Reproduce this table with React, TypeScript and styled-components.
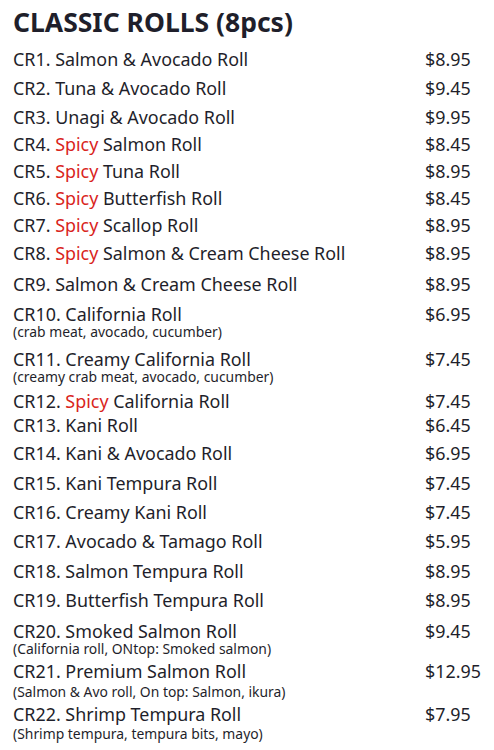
import React from 'react'
import styled, {createGlobalStyle} from "styled-components";

const COLORS = {
    text: '#1f1f2b',
    spicy: '#d9241c',
    bg: '#ffffff',
}

interface Item {
    code: string
    spicy?: boolean
    name: string
    price: string
    note?: string
    gap: number
    noteGap?: number
}

const ITEMS: Item[] = [
    {code: 'CR1.', name: 'Salmon & Avocado Roll', price: '$8.95', gap: 7},
    {code: 'CR2.', name: 'Tuna & Avocado Roll', price: '$9.45', gap: 5},
    {code: 'CR3.', name: 'Unagi & Avocado Roll', price: '$9.95', gap: 5},
    {code: 'CR4.', spicy: true, name: 'Salmon Roll', price: '$8.45', gap: 3},
    {code: 'CR5.', spicy: true, name: 'Tuna Roll', price: '$8.95', gap: 3},
    {code: 'CR6.', spicy: true, name: 'Butterfish Roll', price: '$8.45', gap: 3},
    {code: 'CR7.', spicy: true, name: 'Scallop Roll', price: '$8.95', gap: 3},
    {code: 'CR8.', spicy: true, name: 'Salmon & Cream Cheese Roll', price: '$8.95', gap: 4},
    {code: 'CR9.', name: 'Salmon & Cream Cheese Roll', price: '$8.95', gap: 7},
    {code: 'CR10.', name: 'California Roll', price: '$6.95', note: '(crab meat, avocado, cucumber)', gap: 6},
    {code: 'CR11.', name: 'Creamy California Roll', price: '$7.45', note: '(creamy crab meat, avocado, cucumber)', gap: 8},
    {code: 'CR12.', spicy: true, name: 'California Roll', price: '$7.45', gap: 5},
    {code: 'CR13.', name: 'Kani Roll', price: '$6.45', gap: 0},
    {code: 'CR14.', name: 'Kani & Avocado Roll', price: '$6.95', gap: 4},
    {code: 'CR15.', name: 'Kani Tempura Roll', price: '$7.45', gap: 6},
    {code: 'CR16.', name: 'Creamy Kani Roll', price: '$7.45', gap: 5},
    {code: 'CR17.', name: 'Avocado & Tamago Roll', price: '$5.95', gap: 5},
    {code: 'CR18.', name: 'Salmon Tempura Roll', price: '$8.95', gap: 6},
    {code: 'CR19.', name: 'Butterfish Tempura Roll', price: '$8.95', gap: 5},
    {code: 'CR20.', name: 'Smoked Salmon Roll', price: '$9.45', note: '(California roll, ONtop: Smoked salmon)', gap: 7},
    {code: 'CR21.', name: 'Premium Salmon Roll', price: '$12.95', note: '(Salmon & Avo roll, On top: Salmon, ikura)', gap: 3, noteGap: 3},
    {code: 'CR22.', name: 'Shrimp Tempura Roll', price: '$7.95', note: '(Shrimp tempura, tempura bits, mayo)', gap: 3, noteGap: 2},
]

const GlobalStyle = createGlobalStyle`
  html, body {
    margin: 0;
    padding: 0;
    background: ${COLORS.bg};
  }
  body {
    font-family: 'Noto Sans', 'Liberation Sans', sans-serif;
    color: ${COLORS.text};
  }
`

const App = () => {
    return (
        <>
            <GlobalStyle/>
            <Menu>
                <Heading>CLASSIC ROLLS (8pcs)</Heading>
                <List>
                    {ITEMS.map(item => (
                        <Row key={item.code} $gap={item.gap}>
                            <MainLine>
                                <Name>
                                    {item.code}{' '}
                                    {item.spicy && <Spicy>Spicy </Spicy>}
                                    {item.name}
                                </Name>
                                <Price>{item.price}</Price>
                            </MainLine>
                            {item.note && <Note $gap={item.noteGap ?? 0}>{item.note}</Note>}
                        </Row>
                    ))}
                </List>
            </Menu>
        </>
    )
}

const Menu = styled.main`
  width: 494px;
  padding: 4px 0 16px 13px;
  box-sizing: border-box;
`

const Heading = styled.h1`
  margin: 0;
  font-size: 26.5px;
  line-height: 36px;
  font-weight: 700;
`

const List = styled.ul`
  list-style: none;
  margin: 0;
  padding: 0;
`

const Row = styled.li<{ $gap: number }>`
  margin-top: ${p => p.$gap}px;
  padding: 1px 0;
`

const MainLine = styled.div`
  display: grid;
  grid-template-columns: 412px auto;
  font-size: 17.9px;
  line-height: 22px;
`

const Name = styled.span`
  white-space: nowrap;
`

const Spicy = styled.span`
  color: ${COLORS.spicy};
`

const Price = styled.span``

const Note = styled.div<{ $gap: number }>`
  margin-top: ${p => p.$gap}px;
  font-size: 13.9px;
  line-height: 13px;
  white-space: nowrap;
`

export default App
